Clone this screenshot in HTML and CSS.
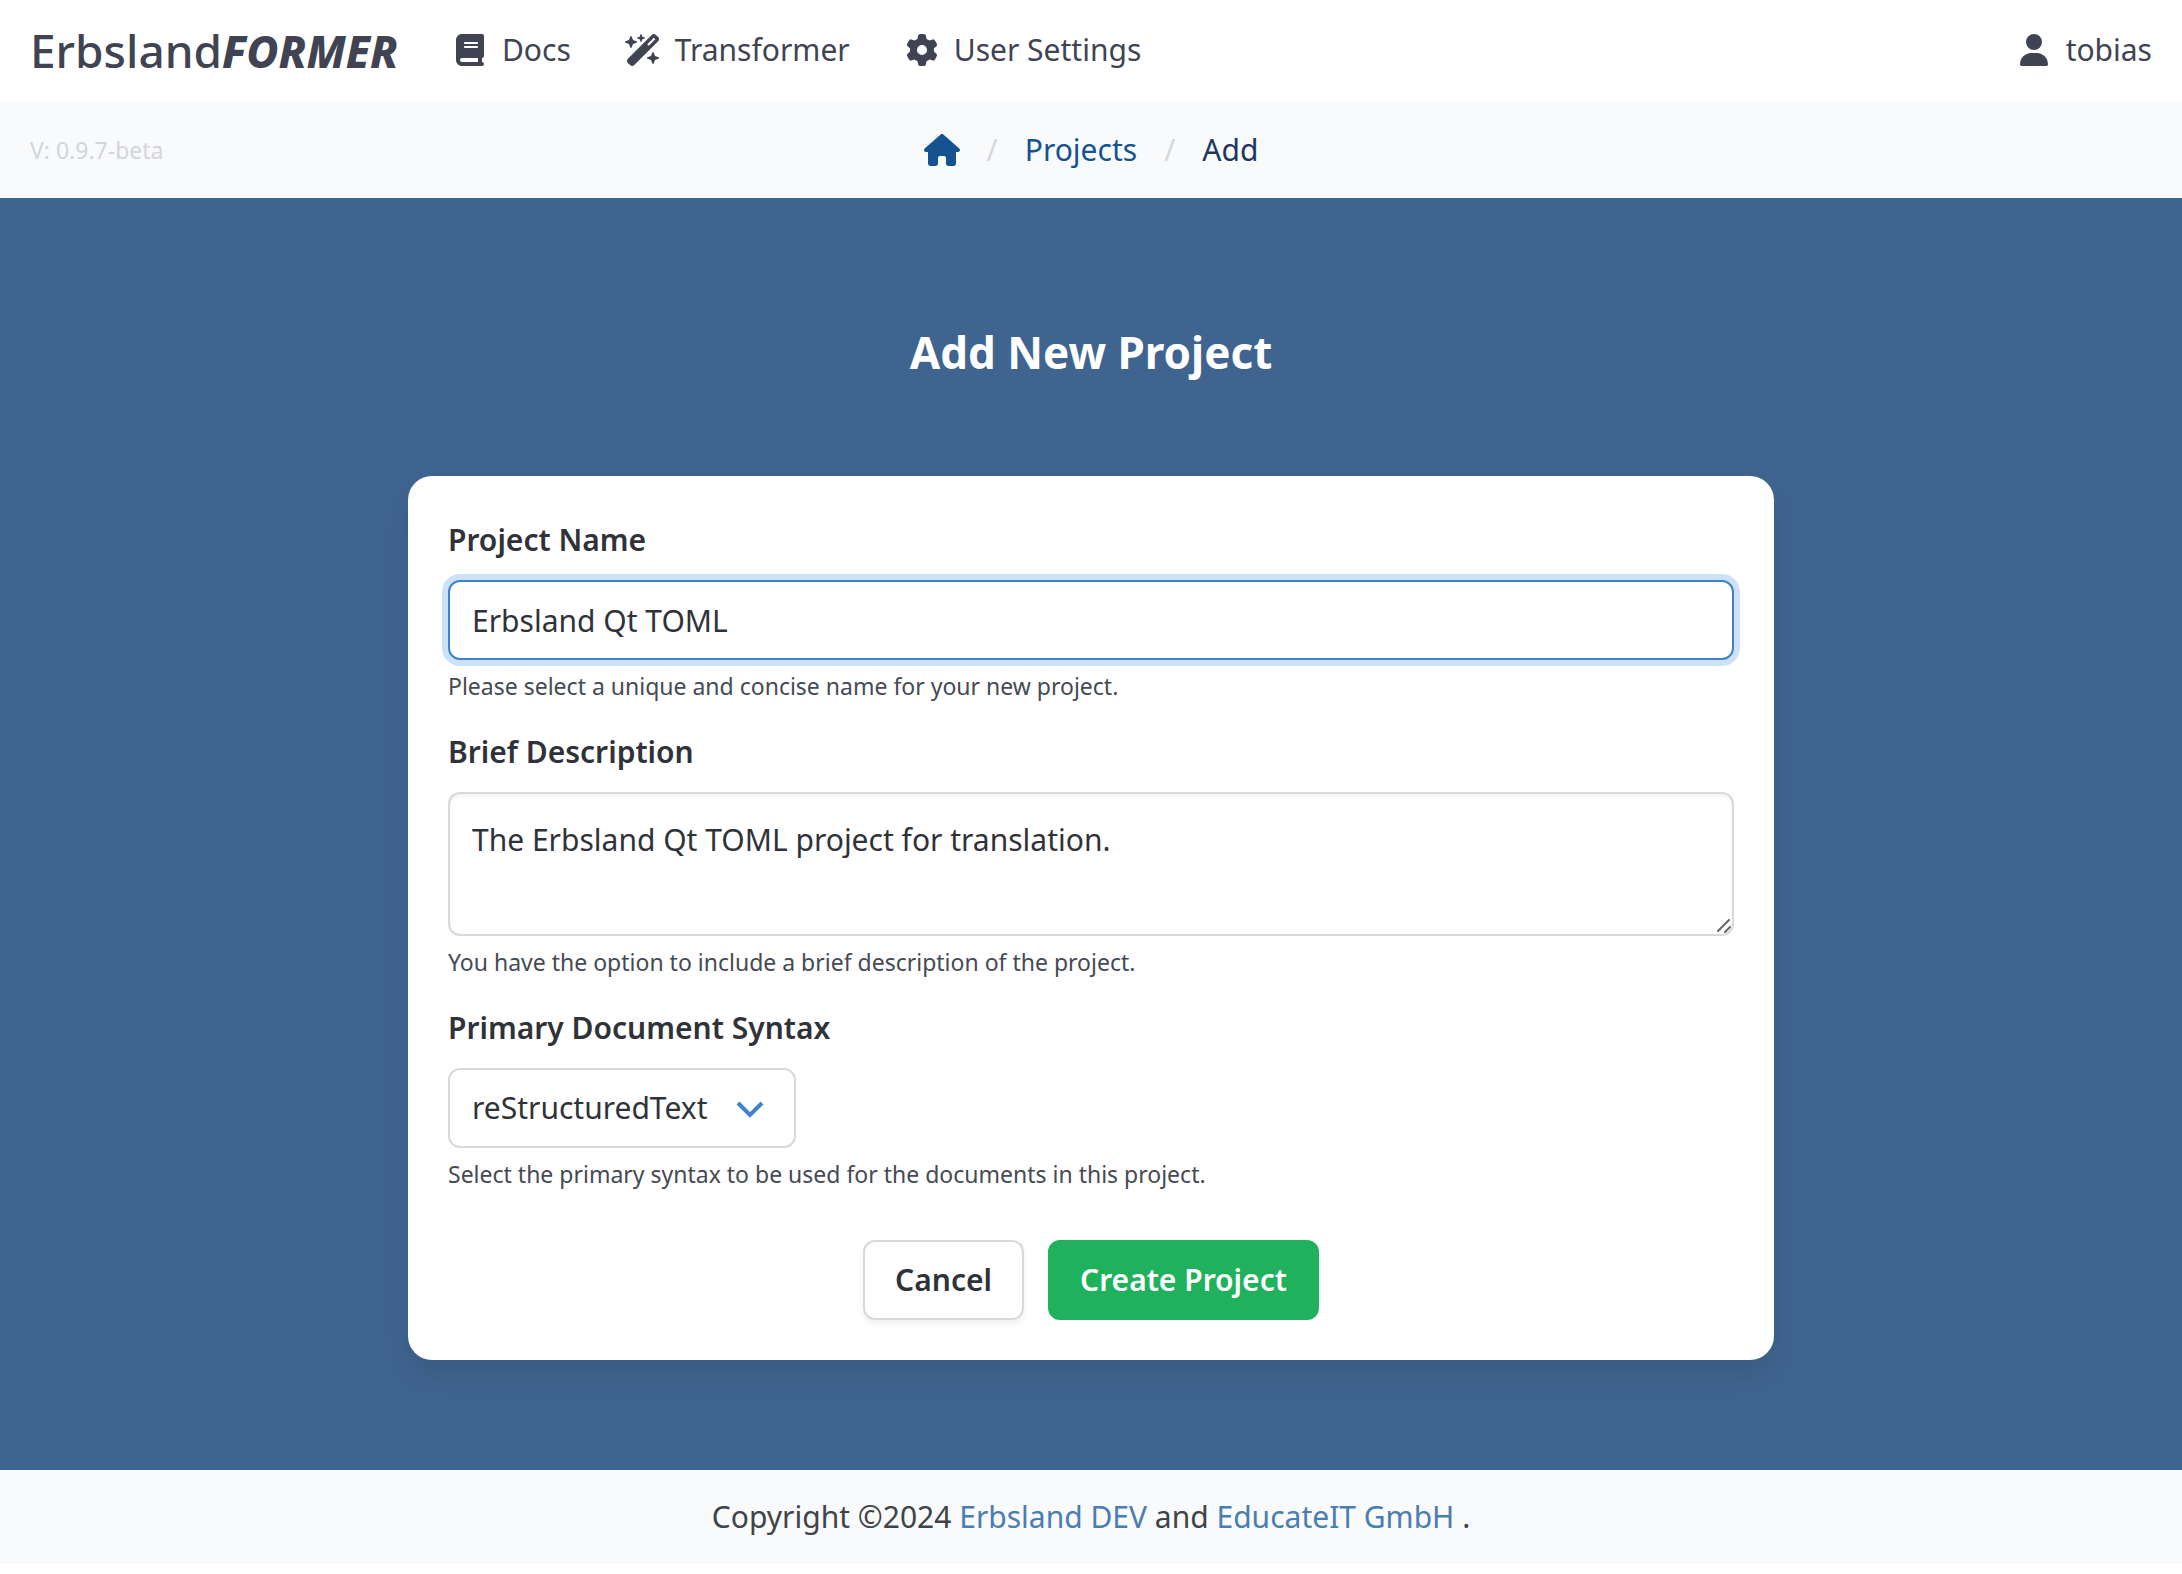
FILE: index.html
```html
<!DOCTYPE html>
<html lang="en">
<head>
<meta charset="utf-8">
<meta name="viewport" content="width=device-width, initial-scale=1">
<title>Add New Project - ErbslandFORMER</title>
<link rel="stylesheet" href="styles.css">
</head>
<body>
<header class="navbar">
  <a class="brand" href="#">Erbsland<em>FORMER</em></a>
  <nav class="menu" aria-label="Main">
    <a class="menu-item" href="#"><svg class="icon narrow" viewBox="0 0 448 512" aria-hidden="true"><path d="M96 0C43 0 0 43 0 96V416c0 53 43 96 96 96H384h32c17.7 0 32-14.3 32-32s-14.3-32-32-32V384c17.7 0 32-14.3 32-32V32c0-17.7-14.3-32-32-32H384 96zm0 384H352v64H96c-17.7 0-32-14.3-32-32s14.3-32 32-32zm32-240c0-8.8 7.2-16 16-16H336c8.8 0 16 7.2 16 16s-7.2 16-16 16H144c-8.8 0-16-7.2-16-16zm16 48H336c8.8 0 16 7.2 16 16s-7.2 16-16 16H144c-8.8 0-16-7.2-16-16s7.2-16 16-16z"/></svg>Docs</a>
    <a class="menu-item" href="#"><svg class="icon wide" viewBox="0 0 576 512" aria-hidden="true"><path d="M234.7 42.7L197 56.8c-3 1.1-5 4-5 7.2s2 6.1 5 7.2l37.7 14.1L248.8 123c1.1 3 4 5 7.2 5s6.1-2 7.2-5l14.1-37.7L315 71.2c3-1.1 5-4 5-7.2s-2-6.1-5-7.2L277.3 42.7 263.2 5c-1.1-3-4-5-7.2-5s-6.1 2-7.2 5L234.7 42.7zM46.1 395.4c-18.7 18.7-18.7 49.1 0 67.9l34.6 34.6c18.7 18.7 49.1 18.7 67.9 0L529.9 116.5c18.7-18.7 18.7-49.1 0-67.9L495.3 14.1c-18.7-18.7-49.1-18.7-67.9 0L46.1 395.4zM484.6 82.6l-105 105-23.3-23.3 105-105 23.3 23.3zM7.5 117.2C3 118.9 0 123.2 0 128s3 9.1 7.5 10.8L64 160l21.2 56.5c1.7 4.5 6 7.5 10.8 7.5s9.1-3 10.8-7.5L128 160l56.5-21.2c4.5-1.7 7.5-6 7.5-10.8s-3-9.1-7.5-10.8L128 96 106.8 39.5C105.1 35 100.8 32 96 32s-9.1 3-10.8 7.5L64 96 7.5 117.2zm352 256c-4.5 1.7-7.5 6-7.5 10.8s3 9.1 7.5 10.8L416 416l21.2 56.5c1.7 4.5 6 7.5 10.8 7.5s9.1-3 10.8-7.5L480 416l56.5-21.2c4.5-1.7 7.5-6 7.5-10.8s-3-9.1-7.5-10.8L480 352l-21.2-56.5c-1.7-4.5-6-7.5-10.8-7.5s-9.1 3-10.8 7.5L416 352l-56.5 21.2z"/></svg>Transformer</a>
    <a class="menu-item" href="#"><svg class="icon" viewBox="0 0 512 512" aria-hidden="true"><path d="M495.9 166.6c3.2 8.7 .5 18.4-6.4 24.6l-43.3 39.4c1.1 8.3 1.7 16.8 1.7 25.4s-.6 17.1-1.7 25.4l43.3 39.4c6.9 6.2 9.6 15.9 6.4 24.6c-4.4 11.9-9.7 23.3-15.8 34.3l-4.7 8.1c-6.6 11-14 21.4-22.1 31.2c-5.9 7.2-15.7 9.6-24.5 6.8l-55.7-17.7c-13.4 10.3-28.2 18.9-44 25.4l-12.5 57.1c-2 9.1-9 16.3-18.2 17.8c-13.8 2.3-28 3.5-42.5 3.5s-28.7-1.2-42.5-3.5c-9.2-1.5-16.2-8.7-18.2-17.8l-12.5-57.1c-15.8-6.5-30.6-15.1-44-25.4L83.1 425.9c-8.8 2.8-18.6 .3-24.5-6.8c-8.1-9.8-15.5-20.2-22.1-31.2l-4.7-8.1c-6.1-11-11.4-22.4-15.8-34.3c-3.2-8.7-.5-18.4 6.4-24.6l43.3-39.4C64.6 273.1 64 264.6 64 256s.6-17.1 1.7-25.4L22.4 191.2c-6.9-6.2-9.6-15.9-6.4-24.6c4.4-11.9 9.7-23.3 15.8-34.3l4.7-8.1c6.6-11 14-21.4 22.1-31.2c5.9-7.2 15.7-9.6 24.5-6.8l55.7 17.7c13.4-10.3 28.2-18.9 44-25.4l12.5-57.1c2-9.1 9-16.3 18.2-17.8C227.3 1.2 241.5 0 256 0s28.7 1.2 42.5 3.5c9.2 1.5 16.2 8.7 18.2 17.8l12.5 57.1c15.8 6.5 30.6 15.1 44 25.4l55.7-17.7c8.8-2.8 18.6-.3 24.5 6.8c8.1 9.8 15.5 20.2 22.1 31.2l4.7 8.1c6.1 11 11.4 22.4 15.8 34.3zM256 336a80 80 0 1 0 0-160 80 80 0 1 0 0 160z"/></svg>User Settings</a>
  </nav>
  <a class="menu-item account" href="#"><svg class="icon narrow" viewBox="0 0 448 512" aria-hidden="true"><path d="M224 256A128 128 0 1 0 224 0a128 128 0 1 0 0 256zm-45.7 48C79.8 304 0 383.8 0 482.3C0 498.7 13.3 512 29.7 512H418.3c16.4 0 29.7-13.3 29.7-29.7C448 383.8 368.2 304 269.7 304H178.3z"/></svg>tobias</a>
</header>

<div class="subbar">
  <span class="version">V: 0.9.7-beta</span>
  <nav aria-label="Breadcrumb">
    <ol class="breadcrumb">
      <li><a href="#" aria-label="Home"><svg class="icon wide" viewBox="0 0 576 512" aria-hidden="true"><path d="M575.8 255.5c0 18-15 32.1-32 32.1h-32l.7 160.2c0 2.7-.2 5.4-.5 8.1V472c0 22.1-17.9 40-40 40H456c-1.1 0-2.2 0-3.3-.1c-1.4 .1-2.8 .1-4.2 .1H416 392c-22.1 0-40-17.9-40-40V448 384c0-17.7-14.3-32-32-32H256c-17.7 0-32 14.3-32 32v64 24c0 22.1-17.9 40-40 40H160 128.1c-1.5 0-3-.1-4.5-.2c-1.2 .1-2.4 .2-3.6 .2H104c-22.1 0-40-17.9-40-40V360c0-.9 0-1.9 .1-2.8V287.6H32c-18 0-32-14-32-32.1c0-9 3-17 10-24L266.4 8c7-7 15-8 22-8s15 2 21 7L564.8 231.5c8 7 12 15 11 24z"/></svg></a></li>
      <li><a href="#">Projects</a></li>
      <li><a class="current" href="#" aria-current="page">Add</a></li>
    </ol>
  </nav>
</div>

<main class="hero">
  <h1 class="title">Add New Project</h1>
  <form class="card">
    <div class="field">
      <label class="label" for="name">Project Name</label>
      <input class="control is-focused" id="name" type="text" value="Erbsland Qt TOML">
      <p class="help">Please select a unique and concise name for your new project.</p>
    </div>
    <div class="field">
      <label class="label" for="description">Brief Description</label>
      <textarea class="control textarea" id="description" rows="2">The Erbsland Qt TOML project for translation.</textarea>
      <p class="help">You have the option to include a brief description of the project.</p>
    </div>
    <div class="field">
      <label class="label" for="syntax">Primary Document Syntax</label>
      <div class="select">
        <select class="control" id="syntax"><option>reStructuredText</option></select>
        <svg class="chevron" viewBox="0 0 28 18" aria-hidden="true"><path d="M2 2 14 14 26 2"/></svg>
      </div>
      <p class="help">Select the primary syntax to be used for the documents in this project.</p>
    </div>
    <div class="actions">
      <button class="button" type="button">Cancel</button>
      <button class="button primary" type="submit">Create Project</button>
    </div>
  </form>
</main>

<footer class="footer">
  <p>Copyright ©2024 <a href="#">Erbsland DEV</a> and <a href="#">EducateIT GmbH</a> .</p>
</footer>
</body>
</html>
```
FILE: styles.css
```css
*, *::before, *::after {
  box-sizing: border-box;
}

body {
  margin: 0;
  background: #fff;
  color: #404654;
  font: 30px/48px "Noto Sans", "Open Sans", sans-serif;
}

a {
  color: inherit;
  text-decoration: none;
}

.icon {
  flex: none;
  width: 32px;
  height: 32px;
  fill: currentColor;
}

.icon.narrow {
  width: 28px;
}

.icon.wide {
  width: 36px;
}

/* Top bar */
.navbar {
  display: flex;
  align-items: center;
  min-height: 102px;
  padding: 0 30px 2px;
  color: #404452;
}

.brand {
  font-size: 46px;
  font-weight: 500;
}

.brand em {
  font-size: 44px;
  font-weight: 800;
}

.menu {
  display: flex;
  gap: 56px;
  margin-left: 56px;
}

.menu-item {
  display: flex;
  align-items: center;
  gap: 16px;
}

/* Every menu icon takes a 32px slot, whatever its own width */
.menu-item .narrow {
  margin: 0 2px;
}

.menu-item .wide {
  margin: 0 -2px;
}

.account {
  margin-left: auto;
}

/* Breadcrumb bar */
.subbar {
  display: grid;
  grid-template-columns: 1fr auto 1fr;
  align-items: center;
  min-height: 96px;
  padding: 0 30px;
  background: #f9fafc;
}

.version {
  color: #d3d5d9;
  font-size: 23px;
}

.breadcrumb {
  display: flex;
  margin: 0;
  padding: 0;
  list-style: none;
  color: #14538f;
}

.breadcrumb li,
.breadcrumb a {
  display: flex;
  align-items: center;
}

.breadcrumb li + li::before {
  content: "/";
  padding: 0 27px;
  color: #d6d8dc;
}

.breadcrumb .current {
  color: #1c3761;
}

/* Form area */
.hero {
  padding: 118px 30px 110px;
  background: #3f648f;
}

.title {
  margin: 0 0 88px;
  color: #fff;
  font-size: 44px;
  line-height: 72px;
  font-weight: 700;
  text-align: center;
}

.card {
  max-width: 1366px;
  margin: 0 auto;
  padding: 40px;
  border-radius: 24px;
  background: #fff;
  box-shadow: 0 16px 32px -4px rgba(10, 10, 30, 0.1);
}

.field + .field {
  margin-top: 24px;
}

.label {
  display: block;
  margin-bottom: 16px;
  color: #2f3339;
  font-weight: 600;
}

.control {
  display: block;
  width: 100%;
  height: 80px;
  padding: 14px 22px;
  border: 2px solid #d9d9db;
  border-radius: 12px;
  background: #fff;
  color: #2f3339;
  font: inherit;
  outline: none;
}

.control.is-focused,
.control:focus {
  border-color: #3e82cf;
  box-shadow: 0 0 0 6px #cde2f7;
}

.textarea {
  height: auto;
  padding: 22px;
  box-shadow: inset 0 2px 4px rgba(10, 10, 10, 0.06);
  resize: vertical;
}

.textarea::-webkit-resizer {
  background: url("data:image/svg+xml,%3Csvg xmlns='http://www.w3.org/2000/svg' viewBox='0 0 15 15'%3E%3Cpath d='M1 12 12 1M8 13 13 8' stroke='%23666' stroke-width='2' stroke-linecap='round'/%3E%3C/svg%3E") no-repeat center;
}

.select {
  position: relative;
  width: fit-content;
}

.select .control {
  padding-right: 86px;
  appearance: none;
}

.chevron {
  position: absolute;
  top: 33px;
  right: 32px;
  width: 28px;
  height: 18px;
  fill: none;
  stroke: #3e82cf;
  stroke-width: 4;
  pointer-events: none;
}

.help {
  margin: 8px 0 0;
  color: #454a54;
  font-size: 23px;
  line-height: 36px;
}

.actions {
  display: flex;
  justify-content: center;
  gap: 24px;
  margin-top: 48px;
}

.button {
  padding: 14px 30px;
  border: 2px solid #d9d9db;
  border-radius: 12px;
  background: #fff;
  box-shadow: 0 4px 6px rgba(10, 10, 10, 0.06);
  color: #2f3339;
  font: inherit;
  font-weight: 600;
}

.button.primary {
  border-color: #20b15d;
  background: #20b15d;
  box-shadow: none;
  color: #fff;
}

/* Footer */
.footer {
  padding: 23px 30px;
  background: #f9fafc;
  color: #404448;
  text-align: center;
}

.footer p {
  margin: 0;
}

.footer a {
  color: #4a7db2;
}
```
